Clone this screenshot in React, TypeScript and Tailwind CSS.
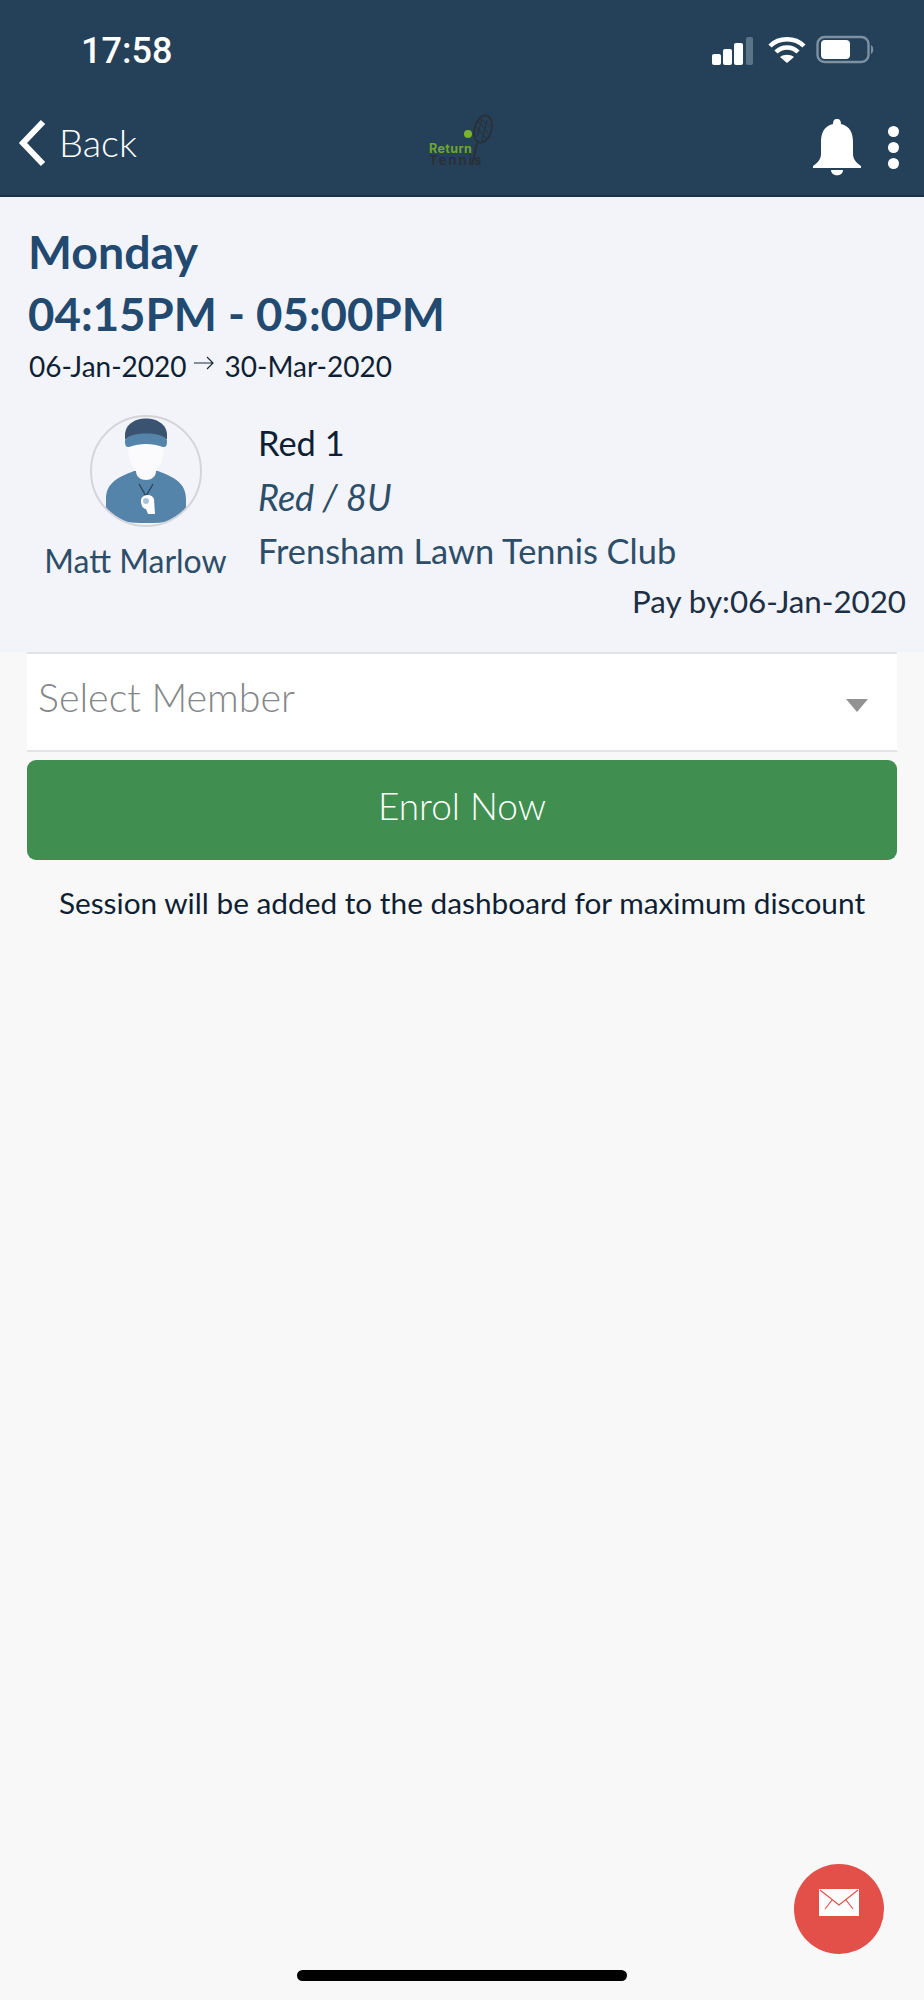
const Lato = '[font-family:Lato,"Open_Sans",sans-serif]';

function StatusIcons() {
  return (
    <div className="flex items-center">
      <svg width="46" height="30" viewBox="0 0 46 30" fill="white">
        <rect x="2" y="19" width="9" height="11" rx="2" />
        <rect x="13" y="14" width="9" height="16" rx="2" />
        <rect x="24" y="8" width="9" height="22" rx="2" />
        <rect x="36" y="2" width="7" height="28" rx="2" fill="#5b7387" />
      </svg>
      <svg className="ml-[12px]" width="38" height="30" viewBox="0 0 38 30" fill="none" stroke="white" strokeWidth="4.5">
        <path d="M2 11 C11 2 27 2 36 11" />
        <path d="M8 17 C14 11 24 11 30 17" />
        <path d="M19 28 L12 22 C16 19 22 19 26 22 Z" fill="white" stroke="none" />
      </svg>
      <svg className="ml-[10px]" width="60" height="30" viewBox="0 0 60 30">
        <rect x="1.5" y="2" width="51" height="25" rx="7" fill="none" stroke="#7d91a2" strokeWidth="2.4" />
        <rect x="5" y="5" width="29" height="19" rx="4" fill="white" />
        <path d="M55 10 C58 11 58 18 55 19 Z" fill="#7d91a2" />
      </svg>
    </div>
  );
}

function Logo() {
  return (
    <svg className="-mt-[8px] ml-[4px] overflow-visible" width="70" height="58" viewBox="0 0 70 58">
      <circle cx="42" cy="19" r="4" fill="#7ab32e" />
      <ellipse cx="57" cy="14" rx="8.5" ry="14" transform="rotate(16 57 14)" fill="none" stroke="#2b2f36" strokeWidth="1.8" />
      <path d="M52 6 L62 18 M50 12 L60 23 M54 3 L64 12 M56 4 L51 22 M61 5 L56 26" stroke="#2b2f36" strokeWidth="1" />
      <path d="M51 28 L46 50" stroke="#2b2f36" strokeWidth="2" />
      <text x="3" y="38" fontFamily="Inter, sans-serif" fontWeight="700" fontSize="12.5" letterSpacing="0.4" fill="#6fa52c">Return</text>
      <text x="3" y="50" fontFamily="Inter, sans-serif" fontWeight="700" fontSize="13" letterSpacing="2" fill="#2b2f36">Tennis</text>
    </svg>
  );
}

function CoachAvatar() {
  return (
    <div className="h-[112px] w-[112px] rounded-full border-2 border-[#d4d5d9] overflow-hidden">
      <svg width="108" height="108" viewBox="0 0 108 108">
        <path d="M14 106 L14 82 C14 66 26 60 42 54 L66 54 C82 60 94 66 94 82 L94 100 C80 108 30 108 14 100 Z" fill="#5584ab" />
        <path d="M36 30 C36 46 42 50 44 54 C44 66 64 66 64 54 C66 50 72 46 72 30 C62 24 46 24 36 30 Z" fill="#fbfbfd" />
        <path d="M33 18 C33 -4 75 -4 75 18 L75 22 L33 22 Z" fill="#3a5371" />
        <path d="M33 24 C33 14 75 14 75 24 C75 29 74 30 71 30 C60 26 48 26 37 30 C34 30 33 29 33 24 Z" fill="#5584ab" />
        <path d="M47 67 L54 79 L61 67" fill="none" stroke="#2f4558" strokeWidth="1.4" />
        <path d="M49 84 C49 77 60 76 62 82 L63 97 L56 97 L54 92 C51 92 49 88 49 84 Z" fill="white" />
        <circle cx="54" cy="84" r="3" fill="#a9c2d8" />
      </svg>
    </div>
  );
}

export default function App() {
  return (
    <div className={`min-h-[2000px] bg-[#f8f8f9] relative ${Lato}`}>
      {/* header */}
      <div className="h-[197px] bg-[#254159] border-b-2 border-[#1c3347]">
        <div className="h-[100px] flex items-center justify-between pl-[81px] pr-[48px]">
          <span className="text-[36px] font-medium text-white [font-family:Roboto,sans-serif] mt-[2px]">17:58</span>
          <StatusIcons />
        </div>
        <div className="h-[95px] flex items-center justify-between pl-[18px] pr-[25px]">
          <div className="flex items-center gap-[13px] w-[300px] -mt-[10px]">
            <svg width="28" height="48" viewBox="0 0 28 48" fill="none" stroke="white" strokeWidth="6">
              <path d="M25 3 L5 24 L25 45" />
            </svg>
            <span className="text-[38px] font-light text-white">Back</span>
          </div>
          <Logo />
          <div className="flex items-center justify-end gap-[26px] w-[300px] -mt-[1px]">
            <svg width="50" height="58" viewBox="0 0 50 58" fill="white">
              <path d="M25 1 C28 1 29 3 29 6 C38 8 41 15 41 24 L41 36 C41 40 43 44 49 48 L49 50 L1 50 L1 48 C7 44 9 40 9 36 L9 24 C9 15 12 8 21 6 C21 3 22 1 25 1 Z" />
              <path d="M19 52 L31 52 C31 59 19 59 19 52 Z" />
            </svg>
            <div className="flex flex-col gap-[5px]">
              <span className="h-[11px] w-[11px] rounded-full bg-white" />
              <span className="h-[11px] w-[11px] rounded-full bg-white" />
              <span className="h-[11px] w-[11px] rounded-full bg-white" />
            </div>
          </div>
        </div>
      </div>

      {/* session info */}
      <div className="h-[455px] bg-[#f2f4fa] pl-[28px] pr-[18px] pt-[28px]">
        <div className="text-[46.5px] leading-[52px] font-bold text-[#224a70]">Monday</div>
        <div className="mt-[11px] text-[45.6px] leading-[52px] font-bold text-[#224a70]">04:15PM - 05:00PM</div>
        <div className="mt-[6px] ml-[1px] flex items-center text-[28px] leading-[40px] text-[#0f1f33]">
          <span>06-Jan-2020</span>
          <svg className="ml-[6px] mr-[10px] mb-[6px]" width="22" height="14" viewBox="0 0 22 14" fill="none" stroke="#1c2b3c" strokeWidth="1.2">
            <path d="M1 7 H20 M14 1 L20 7 L14 13" />
          </svg>
          <span>30-Mar-2020</span>
        </div>
        <div className="mt-[29px] flex">
          <div className="w-[199px] ml-[8px] flex flex-col items-center">
            <div className="ml-[20px]">
              <CoachAvatar />
            </div>
            <div className="mt-[14px] text-[32px] leading-[40px] text-[#2d4e68] whitespace-nowrap">Matt Marlow</div>
          </div>
          <div className="ml-[23px] mt-[8px] text-[#2d4e68]">
            <div className="text-[34.4px] leading-[40px] text-[#0f1f33]">Red 1</div>
            <div className="mt-[14px] text-[36px] leading-[40px] italic">Red / 8U</div>
            <div className="mt-[14px] text-[34.4px] leading-[40px]">Frensham Lawn Tennis Club</div>
          </div>
        </div>
        <div className="text-right text-[31.3px] leading-[40px] text-[#1c2f44]">Pay by:06-Jan-2020</div>
      </div>

      {/* enrol form */}
      <div className="px-[27px]">
        <div className="h-[100px] bg-white border-y-2 border-[#e2e3e7] flex items-center justify-between pl-[11px] pr-[28px]">
          <span className="text-[39.4px] font-light text-[#85878a] -mt-[10px]">Select Member</span>
          <svg className="mt-[6px]" width="24" height="14" viewBox="0 0 24 14" fill="#929292">
            <path d="M1 1 H23 L12 14 Z" />
          </svg>
        </div>
        <button className="mt-[8px] h-[100px] w-full rounded-[9px] bg-[#408e50] text-white text-[37px] font-light pb-[8px]">
          Enrol Now
        </button>
        <p className="mt-[23px] text-center text-[29.8px] leading-[40px] text-[#0f1f33]">
          Session will be added to the dashboard for maximum discount
        </p>
      </div>

      {/* mail button */}
      <div className="absolute left-[794px] top-[1864px] h-[90px] w-[90px] rounded-full bg-[#e34f49] flex justify-center pt-[25px]">
        <svg width="40" height="27" viewBox="0 0 40 27">
          <rect width="40" height="27" fill="white" />
          <path d="M1 1 L20 16 L39 1 M13 11 L6 20 M27 11 L34 20" fill="none" stroke="#e34f49" strokeWidth="1.2" />
        </svg>
      </div>

      {/* home indicator */}
      <div className="absolute left-[297px] top-[1970px] h-[11px] w-[330px] rounded-full bg-black" />
    </div>
  );
}
